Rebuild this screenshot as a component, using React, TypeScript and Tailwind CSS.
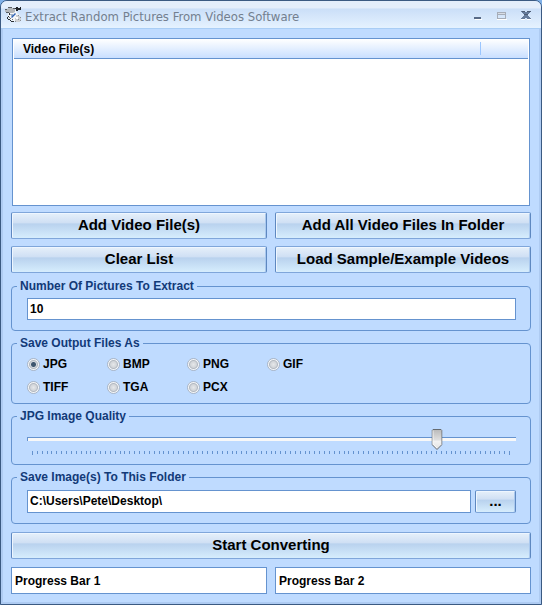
import { useState } from "react";
import type { ReactNode } from "react";

const formats = ["JPG", "BMP", "PNG", "GIF", "TIFF", "TGA", "PCX"];

const TICKS = 98;

function AppIcon() {
  return (
    <svg width="17" height="17" viewBox="0 0 17 17" aria-hidden="true">
      <path d="M3 3h7l2 4 3 3-1 5H8l-4-2-1-4z" fill="#f6f7f8" />
      <path d="M0 3h2l2-1h4l2 1v3L8 7H4L2 6H0z" fill="#b4b7ba" />
      <path d="M0 3h2v1H0zM3 1h4v1H3zM1 6h3v1H1zM8 2h2v1H8z" fill="#5a5f64" />
      <path d="M11 1h2v1h2V1h1v3h-3v1h-2V3h-1V2h1z" fill="#22262b" />
      <path d="M4 7h1v2H4zM3 10h1v1H3zM2 11h1v2H2zM3 13h2v1H3zM5 14h1v1H5zM6 15h3v1H6z" fill="#2c3034" />
      <path d="M4 11h1v1H4zM5 12h1v1H5zM7 13h1v1H7z" fill="#70757a" />
      <path d="M5 8h3v1H5zM6 9h3v1H6z" fill="#9fb0c4" />
      <path d="m6 11 4-4 1 1-4 4z" fill="#2f62b4" />
      <path d="M11 9h2v1h2v2h1v3h-1v1h-4v-1h-1v-3h1z" fill="#cfd1d3" />
      <path d="M11 11h2v2h-2z" fill="#fff" />
      <path d="M13 9h1v1h-1zM15 11h1v1h-1zM10 15h1v1h-1zM13 13h1v1h-1zM15 14h1v1h-1z" fill="#8d9196" />
    </svg>
  );
}

function TitleBar() {
  return (
    <header className="flex h-[28px] items-center border-b border-[#a9cdf5] bg-linear-to-b from-[#e4eefb] from-25% via-[#cbdff8] via-30% to-[#e5f2ff] pr-[9px] pl-1">
      <AppIcon />
      <h1 className="ml-[3px] flex-1 truncate pt-[4px] font-['DejaVu_Sans_Condensed','DejaVu_Sans',sans-serif] text-[13px] leading-[16px] font-normal text-[#737f8f]">
        Extract Random Pictures From Videos Software
      </h1>
      <div className="flex gap-3 pt-[3px]">
        <button type="button" aria-label="Minimize">
          <svg width="12" height="12" shapeRendering="crispEdges">
            <path d="M3 9h7v1H3z" fill="#fff" />
            <path d="M2 7h7v2H2z" fill="#586a86" />
          </svg>
        </button>
        <button type="button" aria-label="Maximize">
          <svg width="12" height="12" shapeRendering="crispEdges">
            <path d="M1 9h10v1H1z" fill="#fff" />
            <path d="M1 2h9v7H1zM2 5v3h7V5z" fill="#a6adb8" fillRule="evenodd" />
            <path d="M2 3h7v1H2z" fill="#d8dde6" />
          </svg>
        </button>
        <button type="button" aria-label="Close">
          <svg width="12" height="12" shapeRendering="crispEdges">
            <path d="M1 9h4v1H1zM7 9h4v1H7z" fill="#fff" />
            <path d="M1 1h4v1h2V1h4v1h-1v1H9v1H8v2h1v1h1v1h1v1H7V8H5v1H1V8h1V7h1V6h1V4H3V3H2V2H1z" fill="#667c9c" />
            <path d="M1 1h4v1H2zM7 1h4v1H7zM4 4h4v1H4z" fill="#4d5c74" />
          </svg>
        </button>
      </div>
    </header>
  );
}

function PushButton({ children, label, className }: { children: ReactNode; label?: string; className: string }) {
  return (
    <button
      type="button"
      aria-label={label}
      className={`rounded-[2px] border border-x-[#5e88c0] border-y-[#7fa6da] bg-[linear-gradient(to_bottom,#e6f0fa_0%,#d0e0f4_38%,#b9d2ee_44%,#d6edfd_100%)] pb-[2px] text-[15px] leading-[20px] font-bold text-black shadow-[inset_1px_1px_0_#eef6ff,inset_-1px_0_0_#a9c8ee] ${className}`}
    >
      {children}
    </button>
  );
}

function Group({ title, children }: { title: string; children: ReactNode }) {
  return (
    <fieldset className="min-w-0 rounded-[4px] border border-[#6593cf] px-[5px]">
      <legend className="px-[3px] text-[12px] leading-[14px] font-bold text-[#123a78]">{title}</legend>
      <div className="pr-[9px] pl-[10px]">{children}</div>
    </fieldset>
  );
}

function QualitySlider() {
  const [quality, setQuality] = useState(85);

  return (
    <div className="relative mt-[6px] mb-[8px] h-[27px]">
      <div className="absolute inset-x-0 top-[8px] h-[4px] border-t border-l border-[#6593cf] bg-[#f8f8f8]" />
      <svg className="absolute top-[22px] left-[5px] h-[5px] w-[calc(100%-12px)] overflow-visible" shapeRendering="crispEdges" aria-hidden="true">
        {Array.from({ length: TICKS + 1 }, (_, i) => (
          <rect key={i} x={`${(i / TICKS) * 100}%`} width="1" height={i === 0 || i === TICKS ? 4 : 3} fill="#6593cf" />
        ))}
      </svg>
      <div className="absolute top-0 left-[5px] w-[calc(100%-12px)]">
        <div className="absolute w-[11px] -translate-x-1/2" style={{ left: `${quality}%` }}>
          <svg width="11" height="21" aria-hidden="true">
            <defs>
              <linearGradient id="thumb" x1="0" y1="0" x2="0" y2="1">
                <stop offset="0" stopColor="#b9b9b9" />
                <stop offset="0.5" stopColor="#dedede" />
                <stop offset="0.6" stopColor="#f2f2f2" />
                <stop offset="1" stopColor="#e2e2e2" />
              </linearGradient>
            </defs>
            <path d="M1.5 .5h8l1 1v14l-5 5-5-5v-14z" fill="url(#thumb)" stroke="#666b70" />
            <path d="M1.5 1.5v13.5l4 4" fill="none" stroke="#fff" strokeOpacity="0.7" />
          </svg>
        </div>
      </div>
      <input
        type="range"
        aria-label="JPG Image Quality"
        min={0}
        max={100}
        value={quality}
        onChange={(e) => setQuality(Number(e.target.value))}
        className="absolute inset-0 h-full w-full opacity-0"
      />
    </div>
  );
}

export default function App() {
  const [format, setFormat] = useState("JPG");

  return (
    <div className="min-h-screen bg-[#7fb0e8] font-['Liberation_Sans',Arial,sans-serif] text-[12px] font-bold text-black">
      <main className="flex min-h-screen flex-col overflow-hidden rounded-t-[7px] border border-[#3b5a82] bg-[#bfdbff] shadow-[inset_-2px_-2px_0_#aecbf2,inset_2px_0_0_#aecbf2]">
        <TitleBar />
        <div className="flex flex-1 flex-col px-[10px] pt-[9px] pb-[10px]">
          <section className="mr-px ml-px flex min-h-[160px] flex-1 flex-col border border-[#6593cf] bg-white">
            <div className="mx-px flex h-[20px] border-b border-[#6593cf] bg-linear-to-b from-white to-[#c9dfff]">
              <h2 className="flex-1 pl-[9px] leading-[21px]">Video File(s)</h2>
              <div className="my-[3px] w-[48px] border-l border-[#9ac6ff]" />
            </div>
          </section>

          <div className="mt-[6px] grid grid-cols-2 gap-x-2 gap-y-[7px]">
            <PushButton className="h-[27px]">Add Video File(s)</PushButton>
            <PushButton className="h-[27px]">Add All Video Files In Folder</PushButton>
            <PushButton className="h-[27px]">Clear List</PushButton>
            <PushButton className="h-[27px]">Load Sample/Example Videos</PushButton>
          </div>

          <div className="mt-[6px] flex flex-col gap-[5px]">
            <Group title="Number Of Pictures To Extract">
              <input
                type="text"
                aria-label="Number Of Pictures To Extract"
                defaultValue="10"
                className="mt-[5px] mb-[10px] block h-[22px] w-full border border-[#6593cf] bg-white px-[2px] outline-none"
              />
            </Group>

            <Group title="Save Output Files As">
              <div className="mt-[7px] mb-[9px] grid grid-cols-[repeat(4,80px)] gap-y-[9px]">
                {formats.map((name) => (
                  <label key={name} className="flex items-center gap-[3px] leading-[14px]">
                    <input
                      type="radio"
                      name="format"
                      checked={format === name}
                      onChange={() => setFormat(name)}
                      className="size-[13px] appearance-none rounded-full border border-[#a9b5c6] bg-[radial-gradient(circle,#e6e8ea_0,#d2d5d9_3px,#b3b9c1_4px,#f4f6f8_5px)] bg-origin-border checked:bg-[radial-gradient(circle,#3f566e_2px,#d5d9de_3px,#b3b9c1_4px,#f4f6f8_5px)]"
                    />
                    {name}
                  </label>
                ))}
              </div>
            </Group>

            <Group title="JPG Image Quality">
              <QualitySlider />
            </Group>

            <Group title="Save Image(s) To This Folder">
              <div className="mt-[6px] mb-[10px] flex gap-1">
                <input
                  type="text"
                  aria-label="Save Image(s) To This Folder"
                  defaultValue="C:\Users\Pete\Desktop\"
                  className="h-[23px] min-w-0 flex-1 border border-[#6593cf] bg-white px-[2px] pb-[2px] outline-none"
                />
                <PushButton label="Browse" className="h-[23px] w-[41px]">
                  ...
                </PushButton>
              </div>
            </Group>
          </div>

          <PushButton className="mt-2 h-[27px]">Start Converting</PushButton>

          <div className="mt-2 grid grid-cols-2 gap-2">
            <div className="h-[27px] border border-[#6593cf] bg-white px-[3px] leading-[26px]">Progress Bar 1</div>
            <div className="h-[27px] border border-[#6593cf] bg-white px-[3px] leading-[26px]">Progress Bar 2</div>
          </div>
        </div>
      </main>
    </div>
  );
}
